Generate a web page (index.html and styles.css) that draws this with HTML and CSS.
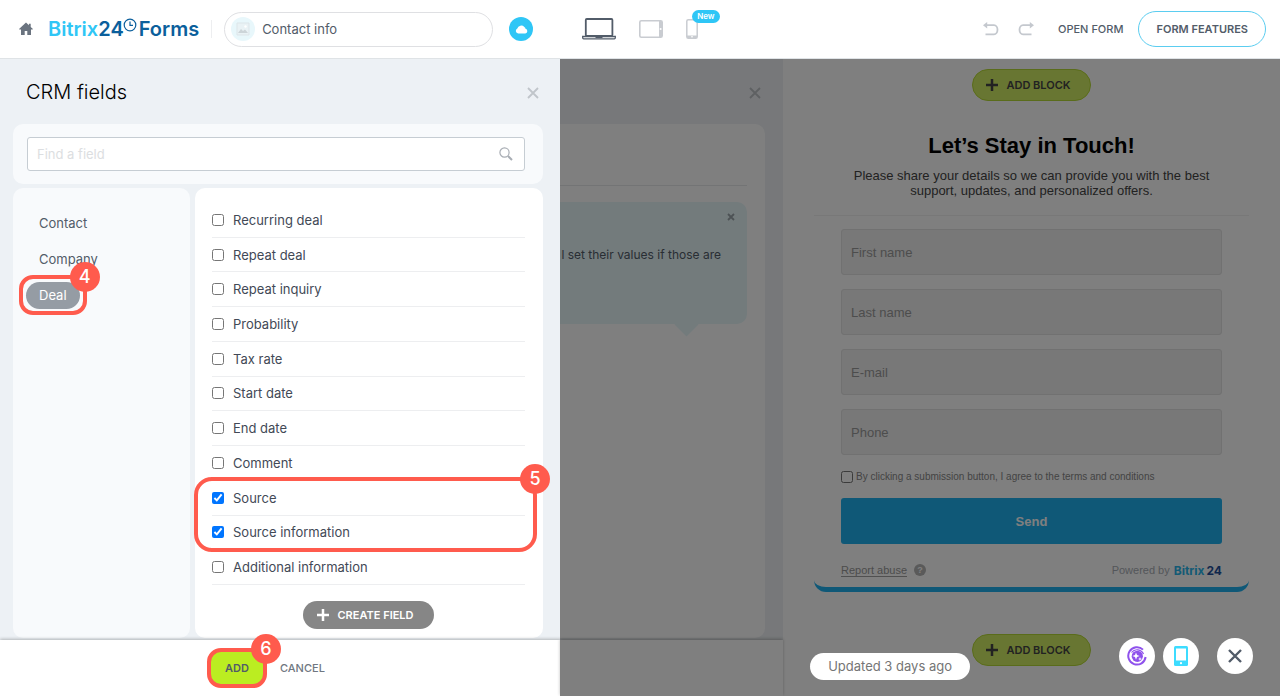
FILE: index.html
```
<!DOCTYPE html>
<html lang="en">
<head>
  <meta charset="UTF-8" />
  <meta name="viewport" content="width=device-width, initial-scale=1.0"/>
  <title>Bitrix24 Forms</title>
  <link rel="stylesheet" href="styles.css">
</head>
<body>
  <header class="topbar">
    <a class="home" href="#" aria-label="Home">
      <svg width="14" height="14" viewBox="0 0 14 14"><path d="M7 0.5 0.3 6.8c-.3.4-.1.8.3.8H2V13h3.700V9h2.600v4H12V7.600h1.400c.4 0 .6-.4.3-.8L11.700 5V1.800h-1.800v1.500z" fill="#6a737f"/></svg>
    </a>
    <a class="logo" href="#"><span class="logo-light">Bitrix</span>24<svg class="logo-clock" width="14" height="14" viewBox="0 0 14 14" fill="none" stroke="#0b5f9c" stroke-width="1.200"><circle cx="7" cy="7" r="5.800"/><path d="M7 3.500V7.300h3"/></svg><span class="logo-forms">Forms</span></a>
    <div class="form-name">
      <span class="form-name-icon">
        <svg width="14" height="14" viewBox="0 0 14 14"><path d="M1 1h12v12H1z" fill="#e9f2f5" stroke="#dde5e9"/><path d="M2 11l3-4 2 2 2-1.500 3 3.500z" fill="#ccd4d8"/><circle cx="9.500" cy="4.500" r="1.200" fill="#fff"/></svg>
      </span>
      <input type="text" aria-label="Form name" value="Contact info">
    </div>
    <button class="cloud" aria-label="Saved">
      <svg width="13" height="10" viewBox="0 0 13 10"><path d="M3.200 9.500A2.700 2.700 0 0 1 2.300 4.400 4 3.800 0 0 1 9.300 3a2 2 0 0 1 1.200 1.800A2.400 2.400 0 0 1 10.300 9.500z" fill="#fff"/></svg>
    </button>
    <div class="devices">
      <button aria-label="Desktop">
        <svg width="34" height="22" viewBox="0 0 34 22" fill="none" stroke="#525c69"><rect x="3.800" y="1" width="26.600" height="17" rx="1" stroke-width="1.800"/><path d="M.7 18.500h32.600v1.300q0 1-1 1H1.700q-1 0-1-1z" stroke-width="1.300" fill="#fff"/><path d="M13.500 19.400h7" stroke-width="1.300"/></svg>
      </button>
      <button aria-label="Tablet">
        <svg width="24" height="18" viewBox="0 0 24 18"><rect x=".8" y=".8" width="22.400" height="16.400" rx="1.500" fill="#fff" stroke="#c9ccd1" stroke-width="1.600"/><path d="M20 1h3v16h-3z" fill="#c9ccd1"/><circle cx="21.600" cy="9" r="1" fill="#fff"/></svg>
      </button>
      <button class="phone" aria-label="Phone">
        <svg width="12" height="20" viewBox="0 0 12 20"><rect x=".8" y=".8" width="10.400" height="18.400" rx="1.500" fill="#fff" stroke="#c9ccd1" stroke-width="1.500"/><path d="M1 16.500h10V19H1z" fill="#c9ccd1"/><path d="M5 17.800h2" stroke="#fff"/></svg>
        <span class="new-badge">New</span>
      </button>
    </div>
    <div class="actions">
      <button class="history" aria-label="Undo">
        <svg width="16" height="14" viewBox="0 0 16 14"><path d="M3.500 3.200H11a3.500 4.600 0 0 1 0 9.200H2.500" fill="none" stroke="#c4c8ce" stroke-width="1.800"/><path d="M0 3.200 4.200 0v6.400z" fill="#c4c8ce"/></svg>
      </button>
      <button class="history" aria-label="Redo">
        <svg width="16" height="14" viewBox="0 0 16 14"><path d="M12.500 3.200H5a3.500 4.600 0 0 0 0 9.200h8.500" fill="none" stroke="#c4c8ce" stroke-width="1.800"/><path d="M16 3.200 11.800 0v6.400z" fill="#c4c8ce"/></svg>
      </button>
      <button class="open-form">OPEN FORM</button>
      <button class="form-features">FORM FEATURES</button>
    </div>
  </header>

  <main class="workspace">
    <section class="panel">
      <div class="panel-head">
        <h1>CRM fields</h1>
        <button class="close" aria-label="Close">
          <svg width="12" height="12" viewBox="0 0 12 12"><path d="M1 1l10 10M11 1 1 11" stroke="#c0c5ca" stroke-width="1.800"/></svg>
        </button>
      </div>
      <div class="panel-body">
        <div class="search-card">
          <div class="search">
            <input type="text" aria-label="Find a field" placeholder="Find a field">
            <svg width="14" height="14" viewBox="0 0 14 14" fill="none" stroke="#a8adb4"><circle cx="5.500" cy="5.500" r="4.600" stroke-width="1.200"/><path d="M9 9l4 4" stroke-width="2"/></svg>
          </div>
        </div>
        <div class="columns">
          <nav class="sections">
            <a href="#">Contact</a>
            <a href="#">Company</a>
            <a href="#" class="active marked">Deal<span class="step">4</span></a>
          </nav>
          <div class="fields-card">
            <div class="fields">
              <label class="field"><input type="checkbox">Recurring deal</label>
              <label class="field"><input type="checkbox">Repeat deal</label>
              <label class="field"><input type="checkbox">Repeat inquiry</label>
              <label class="field"><input type="checkbox">Probability</label>
              <label class="field"><input type="checkbox">Tax rate</label>
              <label class="field"><input type="checkbox">Start date</label>
              <label class="field"><input type="checkbox">End date</label>
              <label class="field"><input type="checkbox">Comment</label>
              <div class="field-pair marked">
                <label class="field"><input type="checkbox" checked>Source</label>
                <label class="field"><input type="checkbox" checked>Source information</label>
                <span class="step">5</span>
              </div>
              <label class="field"><input type="checkbox">Additional information</label>
            </div>
            <button class="create-field"><svg width="12" height="12" viewBox="0 0 12 12"><path d="M6 0v12M0 6h12" stroke="#fff" stroke-width="2.500"/></svg>CREATE FIELD</button>
          </div>
        </div>
      </div>
      <div class="panel-foot">
        <button class="add marked">ADD<span class="step">6</span></button>
        <button class="cancel">CANCEL</button>
      </div>
    </section>

    <div class="dimmed">
      <section class="settings">
        <div class="settings-head">
          <svg width="12" height="12" viewBox="0 0 12 12"><path d="M1 1l10 10M11 1 1 11" stroke="#bcc0c4" stroke-width="1.800"/></svg>
        </div>
        <div class="settings-card">
          <div class="hint">
            <svg class="hint-close" width="8" height="8" viewBox="0 0 8 8"><path d="M1 1l6 6M7 1 1 7" stroke="#9ba5aa" stroke-width="1.800"/></svg>
            <p>l set their values if those are</p>
          </div>
        </div>
        <div class="settings-foot"></div>
      </section>

      <section class="preview">
        <button class="add-block"><svg width="12" height="12" viewBox="0 0 12 12"><path d="M6 0v12M0 6h12" stroke="#444" stroke-width="2.500"/></svg>ADD BLOCK</button>
        <form class="form">
          <div class="form-head">
            <h2>Let’s Stay in Touch!</h2>
            <p>Please share your details so we can provide you with the best support, updates, and personalized offers.</p>
          </div>
          <div class="form-body">
            <input type="text" aria-label="First name" placeholder="First name">
            <input type="text" aria-label="Last name" placeholder="Last name">
            <input type="text" aria-label="E-mail" placeholder="E-mail">
            <input type="text" aria-label="Phone" placeholder="Phone">
            <label class="consent"><input type="checkbox">By clicking a submission button, I agree to the terms and conditions</label>
            <button type="button" class="send">Send</button>
            <div class="form-foot">
              <a class="report" href="#">Report abuse</a>
              <span class="help">?</span>
              <span class="powered">Powered by</span>
              <span class="brand"><span class="brand-light">Bitrix</span>24</span>
            </div>
          </div>
        </form>
        <button class="add-block"><svg width="12" height="12" viewBox="0 0 12 12"><path d="M6 0v12M0 6h12" stroke="#444" stroke-width="2.500"/></svg>ADD BLOCK</button>
      </section>
    </div>

    <div class="updated">Updated 3 days ago</div>
    <div class="floating">
      <button aria-label="CoPilot">
        <svg width="20" height="20" viewBox="0 0 20 20"><path d="M16 3.600A8.700 8.700 0 1 0 18.600 11" fill="none" stroke="#8f52ec" stroke-width="2"/><path d="M4.500 6.500A7 7 0 0 1 16.500 8" fill="none" stroke="#8f52ec" stroke-width="1.200"/><circle cx="10.300" cy="10.300" r="5.600" fill="#8f52ec"/><path d="M9 6.500l1 2.600 2.600 1-2.600 1-1 2.600-1-2.600-2.600-1 2.600-1zM13 11l.6 1.400 1.400.6-1.400.6L13 15l-.6-1.400L11 13l1.400-.6z" fill="#fff"/></svg>
      </button>
      <button aria-label="Mobile view">
        <svg width="14" height="20" viewBox="0 0 14 20"><rect width="14" height="20" rx="1.500" fill="#3ddcff"/><path d="M2 2.500h10v12H2z" fill="#fff"/><circle cx="7" cy="17.200" r="1.100" fill="#fff"/></svg>
      </button>
      <button class="floating-close" aria-label="Close">
        <svg width="14" height="14" viewBox="0 0 14 14"><path d="M1 1l12 12M13 1 1 13" stroke="#525c69" stroke-width="2.400"/></svg>
      </button>
    </div>
  </main>
</body>
</html>
```

FILE: styles.css
```
* {
  box-sizing: border-box;
}
body {
  margin: 0;
  height: 100vh;
  display: flex;
  flex-direction: column;
  font-family: Inter, sans-serif;
  font-size: 13px;
  color: #525c69;
  background: #fff;
}
h1, h2, p {
  margin: 0;
}
a {
  color: inherit;
  text-decoration: none;
}
button, input {
  font: inherit;
  color: inherit;
}
button {
  padding: 0;
  border: none;
  background: none;
  cursor: pointer;
}
svg {
  display: block;
  flex: none;
}

/* Top bar */
.topbar {
  height: 59px;
  flex: none;
  display: flex;
  align-items: center;
  padding: 0 14px 0 19px;
  border-bottom: 1px solid #dfe3e6;
}
.logo {
  display: flex;
  align-items: center;
  margin-left: 15px;
  padding-right: 12px;
  border-right: 1px solid #edeef0;
  font-size: 20px;
  line-height: 18px;
  font-weight: 600;
  color: #0b5f9c;
}
.logo-light {
  color: #2fc6f6;
}
.logo-clock {
  align-self: flex-start;
  margin-top: -2px;
  margin-left: -1px;
}
.logo-forms {
  margin-left: 2px;
}
.form-name {
  display: flex;
  align-items: center;
  width: 269px;
  height: 35px;
  margin-left: 12px;
  padding: 0 6px;
  border: 1px solid #dfe0e3;
  border-radius: 18px;
}
.form-name-icon {
  width: 24px;
  height: 24px;
  flex: none;
  display: grid;
  place-items: center;
  border-radius: 50%;
  background: #e8f7fb;
}
.form-name input {
  flex: 1;
  min-width: 0;
  padding: 0 7px;
  border: none;
  outline: none;
}
.cloud {
  width: 24px;
  height: 24px;
  display: grid;
  place-items: center;
  margin-left: 16px;
  border-radius: 50%;
  background: #2fc6f6;
}
.devices {
  display: flex;
  align-items: center;
  gap: 23px;
  margin-left: 49px;
}
.phone {
  position: relative;
}
.new-badge {
  position: absolute;
  left: 6px;
  top: -9px;
  padding: 0 5px;
  border-radius: 7px;
  background: #2fc6f6;
  color: #fff;
  font-size: 8px;
  line-height: 13px;
  font-weight: 600;
}
.actions {
  display: flex;
  align-items: center;
  margin-left: auto;
}
.history {
  margin-right: 19px;
}
.open-form {
  margin: 0 15px 0 5px;
  font-size: 11px;
  font-weight: 500;
}
.form-features {
  height: 36px;
  padding: 0 17px;
  border: 1px solid #5bcdf0;
  border-radius: 18px;
  font-size: 11px;
  font-weight: 600;
}

/* Workspace */
.workspace {
  position: relative;
  flex: 1;
  min-height: 0;
  display: grid;
  grid-template-columns: 560fr 720fr;
}
.panel {
  display: flex;
  flex-direction: column;
  min-height: 0;
  background: #edf1f5;
}
.panel-head {
  height: 65px;
  flex: none;
  display: flex;
  align-items: center;
  justify-content: space-between;
  padding: 0 21px 0 26px;
}
.panel-head h1 {
  font-size: 20px;
  line-height: 24px;
  font-weight: 300;
  color: #000;
}
.close {
  padding-top: 3px;
}
.panel-body {
  flex: 1;
  min-height: 0;
  display: flex;
  flex-direction: column;
  gap: 4px;
  padding: 0 17px 2px 13px;
}
.search-card {
  padding: 13px 18px 13px 14px;
  border-radius: 10px;
  background: #f8fafc;
}
.search {
  display: flex;
  align-items: center;
  height: 34px;
  padding: 0 11px 0 9px;
  border: 1px solid #c6cdd3;
  border-radius: 3px;
  background: #fff;
}
.search input {
  flex: 1;
  min-width: 0;
  padding: 0;
  border: none;
  outline: none;
}
.search input::placeholder {
  color: #dcdee1;
}
.columns {
  flex: 1;
  display: grid;
  grid-template-columns: 177px 1fr;
  gap: 5px;
}
.sections {
  display: flex;
  flex-direction: column;
  align-items: flex-start;
  gap: 9px;
  padding: 22px 13px;
  border-radius: 10px;
  background: #f8fafc;
}
.sections a {
  padding: 0 13px;
  border-radius: 14px;
  line-height: 27px;
}
.sections .active {
  background: #959ca4;
  color: #fff;
}
.fields-card {
  display: flex;
  flex-direction: column;
  align-items: center;
  padding: 15px 18px 9px 17px;
  border-radius: 10px;
  background: #fff;
}
.fields {
  flex: 1;
  align-self: stretch;
  display: grid;
  grid-template-rows: repeat(11, 1fr);
}
.field {
  display: flex;
  align-items: center;
  gap: 9px;
  border-bottom: 1px solid #edeef0;
  color: #424956;
}
.field input {
  width: 12px;
  height: 12px;
  margin: 0;
}
.field-pair {
  grid-row: span 2;
  display: grid;
  grid-template-rows: 1fr 1fr;
}
.create-field {
  display: flex;
  align-items: center;
  gap: 8px;
  height: 28px;
  margin-top: 16px;
  padding: 0 20px 0 14px;
  border-radius: 14px;
  background: #868686;
  color: #fff;
  font-size: 11px;
  font-weight: 600;
}
.panel-foot, .settings-foot {
  position: relative;
  height: 56px;
  flex: none;
  background: #fff;
  box-shadow: 0 -1px 3px rgba(0,0,0,0.25);
}
.panel-foot {
  display: flex;
  align-items: center;
  justify-content: center;
}
.add {
  height: 34px;
  padding: 0 15px;
  border-radius: 10px;
  background: #bbed21;
  font-size: 11px;
  font-weight: 600;
}
.cancel {
  padding: 0 25px 0 16px;
  font-size: 11px;
  font-weight: 500;
  color: #6f7781;
}

/* Red frames with step numbers */
.marked {
  position: relative;
}
.marked::after {
  content: "";
  position: absolute;
  inset: -7px -7px -6px;
  border: 4px solid #ff5b4d;
  border-radius: 14px;
  pointer-events: none;
}
.field-pair::after {
  inset: -4px -12px -2px -18px;
  border-radius: 18px;
}
.add::after {
  inset: -3px;
}
.step {
  position: absolute;
  z-index: 1;
  right: -20px;
  top: -20px;
  width: 30px;
  height: 30px;
  border-radius: 50%;
  background: #ff5b4d;
  color: #fff;
  font-size: 18px;
  line-height: 30px;
  font-weight: 500;
  text-align: center;
}
.field-pair .step {
  right: -25px;
  top: -17px;
}
.add .step {
  right: -17px;
  top: -17px;
}

/* Everything behind the panel */
.dimmed {
  position: relative;
  min-height: 0;
  display: grid;
  grid-template-columns: 223fr 497fr;
}
.dimmed::after {
  content: "";
  position: absolute;
  inset: 0;
  background: rgba(0,0,0,0.5);
}
.settings {
  min-width: 0;
  display: flex;
  flex-direction: column;
  background: #eef1f4;
}
.settings-head {
  height: 65px;
  display: flex;
  align-items: center;
  justify-content: flex-end;
  padding: 3px 22px 0 0;
}
.settings-card {
  flex: 1;
  margin: 0 18px 2px 0;
  padding: 61px 18px 0 0;
  border-radius: 0 10px 10px 0;
  background: #fff;
}
.hint {
  position: relative;
  border-top: 1px solid #e6e8ea;
}
.hint::before {
  content: "";
  position: absolute;
  right: 52px;
  top: 130px;
  width: 17px;
  height: 17px;
  background: #e6f6f9;
  transform: rotate(45deg);
}
.hint p {
  height: 122px;
  margin-top: 16px;
  padding: 45px 26px 0 0;
  text-align: right;
  white-space: nowrap;
  font-size: 12px;
  line-height: 16px;
  border-radius: 0 10px 10px 0;
  background: #e6f6f9;
}
.hint-close {
  position: absolute;
  right: 12px;
  top: 27px;
}
.preview {
  display: flex;
  flex-direction: column;
  align-items: center;
  padding: 10px 31px 0;
}
.add-block {
  display: flex;
  align-items: center;
  gap: 8px;
  height: 32px;
  padding: 0 19px 0 13px;
  border: 1px solid #b5d936;
  border-radius: 16px;
  background: #d0ec64;
  font-size: 11px;
  font-weight: 600;
  color: #444;
}
.form {
  align-self: stretch;
  margin: 32px 0 42px;
  border-bottom: 5px solid #1eb0ee;
  border-radius: 0 0 12px 12px;
  font-family: "Liberation Sans", Arial, sans-serif;
}
.form-head {
  padding: 0 30px 17px;
  border-bottom: 1px solid #f0f0f0;
  text-align: center;
}
.form-head h2 {
  margin-bottom: 9px;
  font-size: 22px;
  line-height: 26px;
  color: #000;
}
.form-head p {
  line-height: 15px;
  color: #444;
}
.form-body {
  display: flex;
  flex-direction: column;
  gap: 14px;
  padding: 13px 27px 5px;
}
.form-body > input {
  width: 100%;
  height: 46px;
  padding: 0 9px;
  border: 1px solid #e2e2e2;
  border-radius: 3px;
  background: #f0f0f0;
}
.form-body > input::placeholder {
  color: #9a9a9a;
}
.consent {
  display: flex;
  align-items: center;
  gap: 3px;
  height: 15px;
  font-size: 10px;
  color: #888;
}
.consent input {
  width: 12px;
  height: 12px;
  margin: 0;
}
.send {
  height: 46px;
  border-radius: 3px;
  background: #1eb0ee;
  color: #fff;
  font-weight: bold;
}
.form-foot {
  display: flex;
  align-items: center;
  height: 24px;
  font-size: 11px;
  color: #a8adb4;
}
.report {
  border-bottom: 1px solid #a0a0a0;
  color: #999;
}
.help {
  width: 12px;
  height: 12px;
  margin-left: 7px;
  border-radius: 50%;
  background: #b4b4b4;
  color: #fff;
  font-size: 9px;
  line-height: 12px;
  font-weight: bold;
  text-align: center;
}
.powered {
  margin-left: auto;
}
.brand {
  margin-left: 4px;
  font-family: Inter, sans-serif;
  font-size: 12px;
  font-weight: 700;
  color: #1f4f9a;
}
.brand-light {
  margin-right: 2px;
  color: #28b4ea;
}

/* Floating controls */
.updated {
  position: absolute;
  right: 310px;
  bottom: 16px;
  padding: 0 18px;
  border-radius: 14px;
  background: #fff;
  line-height: 27px;
  color: #757575;
}
.floating {
  position: absolute;
  right: 27px;
  bottom: 22px;
  display: flex;
  gap: 8px;
}
.floating button {
  width: 36px;
  height: 36px;
  display: grid;
  place-items: center;
  border-radius: 50%;
  background: #fff;
}
.floating .floating-close {
  margin-left: 10px;
}
```
